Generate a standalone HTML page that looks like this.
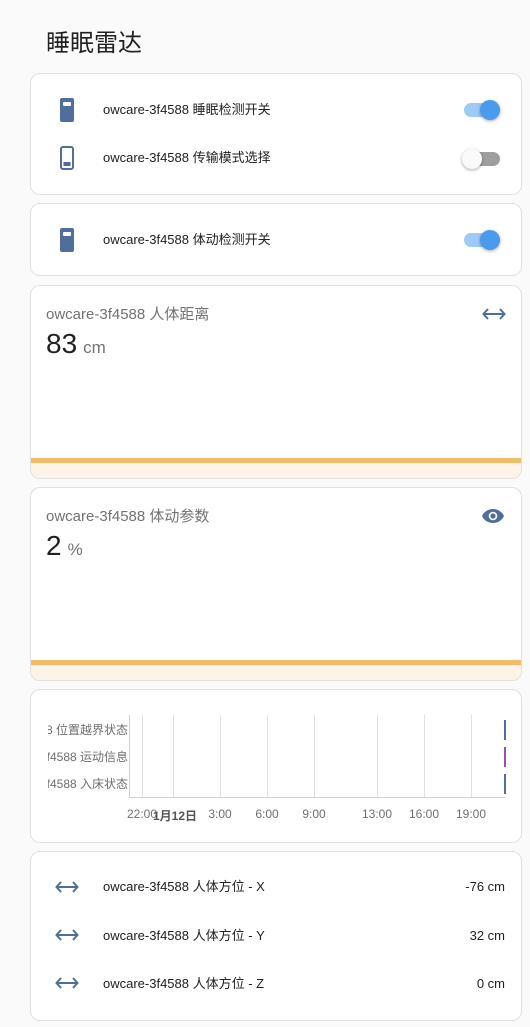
<!DOCTYPE html>
<html><head><meta charset="utf-8"><style>
*{margin:0;padding:0;box-sizing:border-box}
body{width:530px;height:1027px;background:#fafafa;font-family:"Liberation Sans","Noto Sans CJK SC",sans-serif;position:relative;overflow:hidden;color:#212121}
.card{position:absolute;left:30px;width:492px;background:#fff;border:1px solid #e0e0e0;border-radius:10px;overflow:hidden}
.a{position:absolute}
.row{position:absolute;left:72px;font-size:13px;line-height:16px;color:#212121}
.tr{position:absolute;left:433px;width:36px;height:14px;border-radius:7px}
.kn{position:absolute;width:20px;height:20px;border-radius:50%;top:-3px;box-shadow:0 1px 3px rgba(0,0,0,.35)}
.on{background:#9fcaf5}.on .kn{background:#4a9bed;left:16px}
.off{background:#9e9e9e}.off .kn{background:#fafafa;left:-2px}
.gt{position:absolute;left:15px;font-size:15px;color:#727272}
.val{position:absolute;left:15px;font-size:28px;color:#212121}
.val span{font-size:17px;color:#727272;margin-left:6px}
.bar{position:absolute;left:0;right:0;top:172px;height:5px;background:#f3bb66}
.fill{position:absolute;left:0;right:0;top:177px;bottom:0;background:#fdf3e6}
.gl{position:absolute;top:25px;height:82px;width:1px;background:#e0e0e0}
.tk{position:absolute;top:117px;font-size:12px;color:#6f6f6f;transform:translateX(-50%)}
.lb{position:absolute;left:17px;width:80px;overflow:hidden;font-size:12px;line-height:16px;color:#6f6f6f;white-space:nowrap;direction:rtl;text-align:left}
.lb span{direction:ltr;unicode-bidi:embed}
.rv{position:absolute;right:16px;font-size:13px;line-height:16px;color:#212121}
</style></head><body>
<div class="a" style="left:46px;top:23px;font-size:24px;color:#212121">睡眠雷达</div>

<div class="card" style="top:73px;height:122px">
 <svg class="a" style="left:28px;top:24px" width="16" height="24" viewBox="0 0 16 24"><rect x="1" y="0" width="14" height="24" rx="2" fill="#4f6e9b"/><rect x="4" y="4" width="8" height="4" rx="1" fill="#fff"/></svg>
 <div class="row" style="top:28px">owcare-3f4588 睡眠检测开关</div>
 <div class="tr on" style="top:29px"><div class="kn"></div></div>
 <svg class="a" style="left:28px;top:72px" width="16" height="24" viewBox="0 0 16 24"><rect x="2" y="1" width="12" height="22" rx="2" fill="none" stroke="#4f6e9b" stroke-width="2"/><rect x="4.5" y="16" width="7" height="4" fill="#4f6e9b"/></svg>
 <div class="row" style="top:76px">owcare-3f4588 传输模式选择</div>
 <div class="tr off" style="top:78px"><div class="kn"></div></div>
</div>

<div class="card" style="top:203px;height:73px">
 <svg class="a" style="left:28px;top:24px" width="16" height="24" viewBox="0 0 16 24"><rect x="1" y="0" width="14" height="24" rx="2" fill="#4f6e9b"/><rect x="4" y="4" width="8" height="4" rx="1" fill="#fff"/></svg>
 <div class="row" style="top:28px">owcare-3f4588 体动检测开关</div>
 <div class="tr on" style="top:29px"><div class="kn"></div></div>
</div>

<div class="card" style="top:285px;height:194px">
 <div class="gt" style="top:17px">owcare-3f4588 人体距离</div>
 <svg class="a" style="left:451px;top:20px" width="24" height="16" viewBox="0 0 24 16"><path d="M2 8H22M6 3L1.5 8 6 13M18 3L22.5 8 18 13" fill="none" stroke="#4f6e9b" stroke-width="2"/></svg>
 <div class="val" style="top:42px">83<span>cm</span></div>
 <div class="bar"></div><div class="fill"></div>
</div>

<div class="card" style="top:487px;height:194px">
 <div class="gt" style="top:17px">owcare-3f4588 体动参数</div>
 <svg class="a" style="left:450px;top:19px" width="24" height="18" viewBox="0 0 24 18"><path d="M12 2C6.5 2 2.5 5.5 1 9c1.5 3.5 5.5 7 11 7s9.5-3.5 11-7C21.5 5.5 17.5 2 12 2z" fill="#4f6e9b"/><circle cx="12" cy="9" r="4.3" fill="#fff"/><circle cx="12" cy="9" r="2.6" fill="#4f6e9b"/></svg>
 <div class="val" style="top:42px">2<span>%</span></div>
 <div class="bar"></div><div class="fill"></div>
</div>

<div class="card" style="top:689px;height:154px">
 <div class="lb" style="top:32px"><span>owcare-3f4588 位置越界状态</span></div>
 <div class="lb" style="top:59px"><span>owcare-3f4588 运动信息</span></div>
 <div class="lb" style="top:86px"><span>owcare-3f4588 入床状态</span></div>
 <div class="a" style="left:98px;top:25px;width:1px;height:83px;background:#d0d0d0"></div>
 <div class="a" style="left:98px;top:107px;width:376px;height:1px;background:#d0d0d0"></div>
 <div class="gl" style="left:111px"></div><div class="gl" style="left:142px"></div><div class="gl" style="left:189px"></div><div class="gl" style="left:236px"></div><div class="gl" style="left:283px"></div><div class="gl" style="left:346px"></div><div class="gl" style="left:393px"></div><div class="gl" style="left:440px"></div>
 <div class="a" style="left:473px;top:30px;width:1.5px;height:20px;background:#4f6e9b"></div>
 <div class="a" style="left:473px;top:57px;width:1.5px;height:20px;background:#9c4fb0"></div>
 <div class="a" style="left:473px;top:84px;width:1.5px;height:20px;background:#4f6e9b"></div>
 <div class="tk" style="left:111px">22:00</div><div class="tk" style="left:144px;font-weight:bold;color:#555">1月12日</div>
 <div class="tk" style="left:189px">3:00</div><div class="tk" style="left:236px">6:00</div><div class="tk" style="left:283px">9:00</div><div class="tk" style="left:346px">13:00</div><div class="tk" style="left:393px">16:00</div><div class="tk" style="left:440px">19:00</div>
</div>

<div class="card" style="top:851px;height:170px">
 <svg class="a" style="left:24px;top:27px" width="24" height="16" viewBox="0 0 24 16"><path d="M2 8H22M6 3L1.5 8 6 13M18 3L22.5 8 18 13" fill="none" stroke="#4f6e9b" stroke-width="2"/></svg>
 <div class="row" style="top:27px">owcare-3f4588 人体方位 - X</div><div class="rv" style="top:27px">-76 cm</div>
 <svg class="a" style="left:24px;top:75px" width="24" height="16" viewBox="0 0 24 16"><path d="M2 8H22M6 3L1.5 8 6 13M18 3L22.5 8 18 13" fill="none" stroke="#4f6e9b" stroke-width="2"/></svg>
 <div class="row" style="top:76px">owcare-3f4588 人体方位 - Y</div><div class="rv" style="top:76px">32 cm</div>
 <svg class="a" style="left:24px;top:123px" width="24" height="16" viewBox="0 0 24 16"><path d="M2 8H22M6 3L1.5 8 6 13M18 3L22.5 8 18 13" fill="none" stroke="#4f6e9b" stroke-width="2"/></svg>
 <div class="row" style="top:124px">owcare-3f4588 人体方位 - Z</div><div class="rv" style="top:124px">0 cm</div>
</div>
</body></html>
